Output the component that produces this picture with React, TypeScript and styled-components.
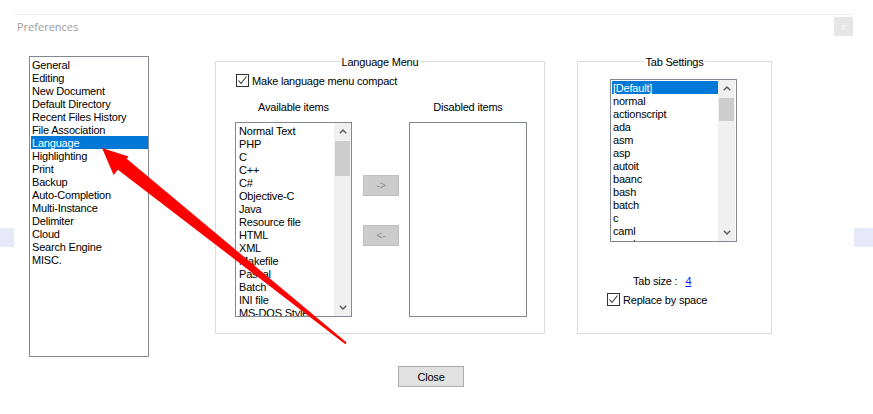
import React from "react";
import styled, { createGlobalStyle } from "styled-components";

const Global = createGlobalStyle`
  html, body { margin: 0; padding: 0; background: #ffffff; }
  body {
    font-family: "Liberation Sans", Arial, sans-serif;
    font-size: 11px;
    letter-spacing: -0.2px;
    color: #000000;
  }
`;

const Page = styled.div`
  position: relative;
  width: 873px;
  height: 414px;
  overflow: hidden;
  display: flex;
  align-items: flex-start;
  background: #ffffff;
`;

const SideMark = styled.div<{ $w: number }>`
  flex: none;
  width: ${(p) => p.$w}px;
  height: 19px;
  margin-top: 228px;
  background: #e8e8fb;
`;

const Dialog = styled.div`
  flex: none;
  width: 839px;
  margin-top: 14px;
  margin-right: 1px;
  border-top: 1px solid #efefef;
`;

const Header = styled.div`
  height: 22px;
  display: flex;
  align-items: center;
  justify-content: space-between;
  padding-left: 3px;
`;

const Title = styled.div`
  font-family: "Open Sans", "Liberation Sans", sans-serif;
  font-size: 11px;
  letter-spacing: 0;
  color: #9c9c9c;
`;

const CloseX = styled.div`
  align-self: flex-start;
  margin-top: 2px;
  width: 19px;
  height: 19px;
  background: #e6e6e6;
  color: #f7f7f7;
  font-size: 9px;
  font-weight: bold;
  display: flex;
  align-items: center;
  justify-content: center;
`;

const Body = styled.div`
  display: flex;
  align-items: flex-start;
  padding-left: 15px;
`;

const CategoryList = styled.div`
  box-sizing: border-box;
  width: 120px;
  height: 301px;
  margin-top: 19px;
  border: 1px solid #828790;
  padding: 1px 0 0 1px;
`;

const Item = styled.div<{ $selected?: boolean }>`
  height: 12px;
  padding-top: 1px;
  line-height: 13px;
  padding-left: 1px;
  white-space: nowrap;
  background: ${(p) => (p.$selected ? "#0078d7" : "transparent")};
  color: ${(p) => (p.$selected ? "#ffffff" : "#000000")};
`;

const GroupBox = styled.div<{ $w: number; $ml: number }>`
  position: relative;
  box-sizing: border-box;
  width: ${(p) => p.$w}px;
  height: 273px;
  margin-top: 24px;
  margin-left: ${(p) => p.$ml}px;
  border: 1px solid #dcdcdc;
`;

const Legend = styled.div`
  position: absolute;
  top: -7px;
  left: 50%;
  transform: translateX(-50%);
  background: #ffffff;
  padding: 0 1px;
  line-height: 14px;
  white-space: nowrap;
`;

const LangInner = styled.div`
  padding: 11px 0 0 20px;
`;

const CheckRow = styled.div<{ $ml?: number; $mt?: number }>`
  display: flex;
  align-items: center;
  height: 15px;
  gap: 3px;
  margin-left: ${(p) => p.$ml ?? 0}px;
  margin-top: ${(p) => p.$mt ?? 0}px;
  white-space: nowrap;
`;

const CheckBox = styled.span`
  box-sizing: border-box;
  width: 13px;
  height: 13px;
  border: 1px solid #333333;
  background: #ffffff;
  display: flex;
  align-items: center;
  justify-content: center;
`;

const Columns = styled.div`
  display: flex;
  align-items: flex-start;
  margin-top: 12px;
  margin-left: -1px;
`;

const Column = styled.div`
  display: flex;
  flex-direction: column;
  align-items: center;
`;

const ColumnTitle = styled.div`
  line-height: 14px;
  margin-bottom: 8px;
  white-space: nowrap;
`;

const ListBox = styled.div<{ $w: number; $h: number }>`
  box-sizing: border-box;
  width: ${(p) => p.$w}px;
  height: ${(p) => p.$h}px;
  border: 1px solid #828790;
  display: flex;
  overflow: hidden;
  background: #ffffff;
`;

const ListItems = styled.div<{ $pl: number }>`
  flex: 1;
  min-width: 0;
  padding: 1px 0 0 ${(p) => p.$pl}px;
  overflow: hidden;
`;

const ScrollBar = styled.div<{ $mr?: number }>`
  flex: none;
  width: 17px;
  margin-right: ${(p) => p.$mr ?? 0}px;
  background: #f0f0f0;
  display: flex;
  flex-direction: column;
`;

const ScrollButton = styled.div`
  height: 17px;
  display: flex;
  align-items: center;
  justify-content: center;
`;

const Thumb = styled.div<{ $h: number }>`
  height: ${(p) => p.$h}px;
  margin: 1px 1px 0 1px;
  background: #cdcdcd;
`;

const ScrollFill = styled.div`
  flex: 1;
`;

const MiddleColumn = styled.div`
  display: flex;
  flex-direction: column;
  width: 36px;
  margin: 0 10px 0 11px;
  padding-top: 75px;
  gap: 29px;
`;

const MoveButton = styled.div`
  box-sizing: border-box;
  height: 21px;
  background: #cccccc;
  border: 1px solid #bfbfbf;
  color: #8c8c8c;
  display: flex;
  align-items: center;
  justify-content: center;
  font-size: 10px;
`;

const TabInner = styled.div`
  display: flex;
  flex-direction: column;
  padding: 17px 0 0 32px;
`;

const TabSizeRow = styled.div`
  margin-top: 32px;
  margin-left: 23px;
  line-height: 14px;
  display: flex;
  gap: 8px;
  white-space: nowrap;
`;

const Link = styled.span`
  color: #1010ff;
  text-decoration: underline;
`;

const Footer = styled.div`
  display: flex;
  justify-content: center;
  margin-top: 9px;
  padding-right: 5px;
`;

const CloseButton = styled.div`
  box-sizing: border-box;
  width: 66px;
  height: 21px;
  background: #e1e1e1;
  border: 1px solid #adadad;
  display: flex;
  align-items: center;
  justify-content: center;
`;

const ArrowOverlay = styled.svg`
  position: absolute;
  left: 0;
  top: 0;
  pointer-events: none;
`;

const categories = [
  "General",
  "Editing",
  "New Document",
  "Default Directory",
  "Recent Files History",
  "File Association",
  "Language",
  "Highlighting",
  "Print",
  "Backup",
  "Auto-Completion",
  "Multi-Instance",
  "Delimiter",
  "Cloud",
  "Search Engine",
  "MISC.",
];

const languages = [
  "Normal Text",
  "PHP",
  "C",
  "C++",
  "C#",
  "Objective-C",
  "Java",
  "Resource file",
  "HTML",
  "XML",
  "Makefile",
  "Pascal",
  "Batch",
  "INI file",
  "MS-DOS Style",
];

const tabLangs = [
  "[Default]",
  "normal",
  "actionscript",
  "ada",
  "asm",
  "asp",
  "autoit",
  "baanc",
  "bash",
  "batch",
  "c",
  "caml",
  "cmake",
];

const Check = () => (
  <CheckBox>
    <svg width="11" height="11" viewBox="0 0 11 11">
      <polyline points="1.5,5.5 4,8.5 9.5,1.5" fill="none" stroke="#333" strokeWidth="1.1" />
    </svg>
  </CheckBox>
);

const Chevron = ({ up }: { up?: boolean }) => (
  <svg width="8" height="5" viewBox="0 0 8 5">
    <polyline
      points={up ? "0.8,4.2 4,1 7.2,4.2" : "0.8,0.8 4,4 7.2,0.8"}
      fill="none"
      stroke="#606060"
      strokeWidth="1.5"
    />
  </svg>
);

const VScroll = ({ thumb, mr }: { thumb: number; mr?: number }) => (
  <ScrollBar $mr={mr}>
    <ScrollButton>
      <Chevron up />
    </ScrollButton>
    <Thumb $h={thumb} />
    <ScrollFill />
    <ScrollButton>
      <Chevron />
    </ScrollButton>
  </ScrollBar>
);

export default function App() {
  return (
    <>
      <Global />
      <Page>
        <SideMark $w={14} />
        <Dialog>
          <Header>
            <Title>Preferences</Title>
            <CloseX>x</CloseX>
          </Header>
          <Body>
            <CategoryList>
              {categories.map((c) => (
                <Item key={c} $selected={c === "Language"}>
                  {c}
                </Item>
              ))}
            </CategoryList>

            <GroupBox $w={330} $ml={66}>
              <Legend>Language Menu</Legend>
              <LangInner>
                <CheckRow>
                  <Check />
                  <span>Make language menu compact</span>
                </CheckRow>
                <Columns>
                  <Column>
                    <ColumnTitle>Available items</ColumnTitle>
                    <ListBox $w={117} $h={195}>
                      <ListItems $pl={2}>
                        {languages.map((l) => (
                          <Item key={l}>{l}</Item>
                        ))}
                      </ListItems>
                      <VScroll thumb={35} />
                    </ListBox>
                  </Column>
                  <MiddleColumn>
                    <MoveButton>-&gt;</MoveButton>
                    <MoveButton>&lt;-</MoveButton>
                  </MiddleColumn>
                  <Column>
                    <ColumnTitle>Disabled items</ColumnTitle>
                    <ListBox $w={118} $h={195} />
                  </Column>
                </Columns>
              </LangInner>
            </GroupBox>

            <GroupBox $w={195} $ml={32}>
              <Legend>Tab Settings</Legend>
              <TabInner>
                <ListBox $w={127} $h={163}>
                  <ListItems $pl={1}>
                    {tabLangs.map((l) => (
                      <Item key={l} $selected={l === "[Default]"}>
                        {l}
                      </Item>
                    ))}
                  </ListItems>
                  <VScroll thumb={23} mr={1} />
                </ListBox>
                <TabSizeRow>
                  <span>Tab size :</span>
                  <Link>4</Link>
                </TabSizeRow>
                <CheckRow $ml={-3} $mt={4}>
                  <Check />
                  <span>Replace by space</span>
                </CheckRow>
              </TabInner>
            </GroupBox>
          </Body>
          <Footer>
            <CloseButton>Close</CloseButton>
          </Footer>
        </Dialog>
        <SideMark $w={19} />
        <ArrowOverlay width="873" height="414" viewBox="0 0 873 414">
          <polygon
            points="102,148 128.5,156.4 126.7,158.7 346.6,342.6 345.4,344.2 117.9,169.7 113.6,175.1"
            fill="#ff0000"
          />
        </ArrowOverlay>
      </Page>
    </>
  );
}
